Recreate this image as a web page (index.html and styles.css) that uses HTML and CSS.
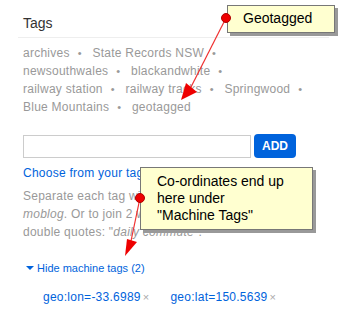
FILE: index.html
```html
<!DOCTYPE html>
<html lang="en">
<head>
  <meta charset="UTF-8">
  <title>Tags</title>
<link rel="stylesheet" href="styles.css">
</head>
<body>
  <div class="panel">
    <h2 class="title">Tags</h2>
    <div class="body">
      <div class="tag-list">
        <span class="tag"><a>archives</a><span class="dot">•</span></span>
        <span class="tag"><a>State Records NSW</a><span class="dot">•</span></span>
        <span class="tag"><a>newsouthwales</a><span class="dot">•</span></span>
        <span class="tag"><a>blackandwhite</a><span class="dot">•</span></span>
        <span class="tag"><a>railway station</a><span class="dot">•</span></span>
        <span class="tag"><a>railway tracks</a><span class="dot">•</span></span>
        <span class="tag"><a>Springwood</a><span class="dot">•</span></span>
        <span class="tag"><a>Blue Mountains</a><span class="dot">•</span></span>
        <span class="tag"><a>geotagged</a></span>
      </div>

      <div class="add-row">
        <input type="text" class="tag-input">
        <button class="add-btn">ADD</button>
      </div>

      <a class="choose">Choose from your tags</a>
      <p class="help">Separate each tag with a space: cameraphone <i>moblog</i>. Or to join 2 words together in one tag, use double quotes: "<i>daily commute</i>".</p>

      <a class="toggle"><span class="caret"></span>Hide machine tags (2)</a>
      <div class="machine-tags">
        <span class="mtag"><a>geo:lon=-33.6989</a><span class="remove">×</span></span>
        <span class="mtag"><a>geo:lat=150.5639</a><span class="remove">×</span></span>
      </div>
    </div>
  </div>

  <div class="callout callout-geo">Geotagged</div>
  <div class="callout callout-coords">Co-ordinates end up<br>here under<br>"Machine Tags"</div>

  <svg class="notes" width="341" height="325" viewBox="0 0 341 325">
    <line x1="226" y1="18" x2="190" y2="89" stroke="#f03030" stroke-width="1.2"/>
    <polygon points="186,83 197,92 181,100" fill="#ee0000"/>
    <circle cx="226" cy="18" r="4.5" fill="#ee0000" stroke="#b00000" stroke-width="1"/>

    <line x1="140" y1="198" x2="131" y2="241" stroke="#f03030" stroke-width="1.2"/>
    <polygon points="127,239 137,242 125,256" fill="#ee0000"/>
    <circle cx="140" cy="198" r="4.5" fill="#ee0000" stroke="#b00000" stroke-width="1"/>
  </svg>
</body>
</html>
```

FILE: styles.css
```css
body {
  margin: 0;
  background: #fff;
  font-family: "Liberation Sans", Arial, sans-serif;
  font-size: 12px;
  position: relative;
  width: 341px;
  height: 325px;
  overflow: hidden;
}

.title {
  margin: 0 12px 0 18px;
  padding: 15px 0 6px 5px;
  font-size: 14px;
  line-height: 16px;
  font-weight: normal;
  color: #333;
  border-bottom: 1px solid #eee;
}

.body {
  padding-left: 23px;
  width: 285px;
  letter-spacing: 0.25px;
}

.tag-list {
  width: 290px;
  margin-top: 6px;
  line-height: 18px;
  color: #999;
}
.tag-list .tag {
  white-space: nowrap;
}
.tag-list a {
  color: #999;
}
.tag-list .dot {
  font-size: 11px;
  margin: 0 7px 0 8px;
}

.add-row {
  display: flex;
  align-items: flex-start;
  gap: 3px;
  margin-top: 18px;
}
.tag-input {
  margin: 1px 0 0 0;
  width: 228px;
  height: 23px;
  box-sizing: border-box;
  border: 1px solid #ccc;
  padding: 2px 4px;
}
.add-btn {
  width: 42px;
  height: 24px;
  background: #0063dc;
  color: #fff;
  border: none;
  border-radius: 4px;
  font-family: "Liberation Sans", Arial, sans-serif;
  font-weight: bold;
  font-size: 12px;
  padding: 0;
}

.choose {
  display: block;
  margin-top: 6px;
  line-height: 18px;
  color: #0063dc;
}

.help {
  margin: 5px 0 0 0;
  line-height: 18px;
  color: #999;
}

.toggle {
  display: flex;
  align-items: center;
  margin-top: 18px;
  margin-left: 3px;
  font-size: 11px;
  letter-spacing: 0;
  line-height: 18px;
  color: #0063dc;
}
.caret {
  width: 0;
  height: 0;
  border-left: 4px solid transparent;
  border-right: 4px solid transparent;
  border-top: 4px solid #0063dc;
  margin-right: 3px;
}

.machine-tags {
  display: flex;
  gap: 21px;
  margin-top: 11px;
  padding-left: 20px;
  line-height: 18px;
}
.mtag a {
  color: #0063dc;
}
.remove {
  color: #aaa;
  font-size: 11px;
  margin-left: 2px;
}

.callout {
  position: absolute;
  box-sizing: border-box;
  background: #ffffd0;
  border: 1px solid #777;
  box-shadow: 3px 3px 0 #999;
  color: #000;
  font-size: 14px;
  line-height: 17px;
}
.callout-geo {
  left: 227px;
  top: 5px;
  width: 108px;
  height: 28px;
  padding: 4px 0 0 15px;
}
.callout-coords {
  left: 140px;
  top: 167px;
  width: 173px;
  height: 63px;
  padding: 5px 0 0 16px;
}

.notes {
  position: absolute;
  left: 0;
  top: 0;
}
```
